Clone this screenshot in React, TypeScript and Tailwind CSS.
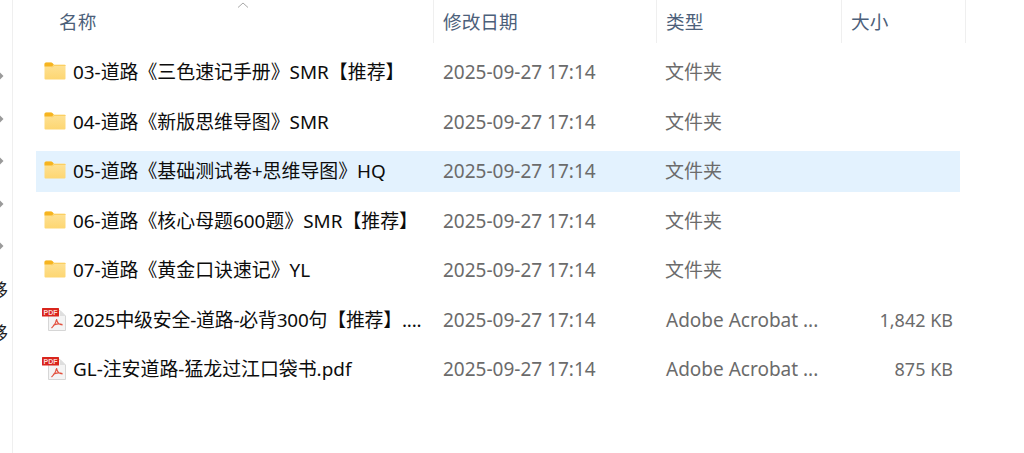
const CJK = "font-['Noto_Sans','Noto_Sans_CJK_SC',sans-serif]";

function FolderIcon() {
  return (
    <svg width="22" height="18" viewBox="0 0 22 18" className="mb-[3px] shrink-0">
      <defs>
        <linearGradient id="folderBody" x1="0" y1="0" x2="0" y2="1">
          <stop offset="0" stopColor="#fee39a" />
          <stop offset="1" stopColor="#fdd671" />
        </linearGradient>
      </defs>
      <path d="M0.5 2 Q0.5 0.5 2 0.5 H7 Q8 0.5 8.8 1.5 L9.5 2.5 H20.5 Q21.5 2.5 21.5 3.5 V16.5 Q21.5 17.5 20.5 17.5 H1.5 Q0.5 17.5 0.5 16.5 Z" fill="url(#folderBody)" />
      <path d="M8 5.5 L10 3.5 H21.5" fill="none" stroke="#fbcf62" strokeWidth="1" />
      <path d="M0.5 2 Q0.5 0.5 2 0.5 H7 Q8 0.5 8.8 1.5 L9.8 2.8 L8 4.4 H0.5 Z" fill="#f6b420" />
    </svg>
  );
}

function PdfIcon() {
  return (
    <svg width="24" height="23" viewBox="0 0 24 23" className="mb-[2px] shrink-0">
      <path d="M6.5 2.5 H18 L23.5 8 V22.5 H6.5 Z" fill="#f4f4f4" stroke="#d6d6d6" strokeWidth="1" />
      <path d="M18 2.5 V8 H23.5 Z" fill="#dedede" />
      <rect x="0" y="0" width="17" height="8.5" rx="0.5" fill="#d9251c" />
      <text x="8.5" y="7" textAnchor="middle" fontSize="7" fontWeight="700" fontFamily="Liberation Sans, sans-serif" fill="#f9d9d6">PDF</text>
      <path d="M14.5 11 C14 14 12.5 17.5 9.5 20 M14.5 11 C15 14.5 17 17 20.5 17 M11 17.5 C13.5 15.8 17.5 15.6 20.5 16.6" fill="none" stroke="#e2513f" strokeWidth="1.2" />
    </svg>
  );
}

const rows = [
  { name: "03-道路《三色速记手册》SMR【推荐】", type: "文件夹", size: "", pdf: false, sel: false },
  { name: "04-道路《新版思维导图》SMR", type: "文件夹", size: "", pdf: false, sel: false },
  { name: "05-道路《基础测试卷+思维导图》HQ", type: "文件夹", size: "", pdf: false, sel: true },
  { name: "06-道路《核心母题600题》SMR【推荐】", type: "文件夹", size: "", pdf: false, sel: false },
  { name: "07-道路《黄金口诀速记》YL", type: "文件夹", size: "", pdf: false, sel: false },
  { name: "2025中级安全-道路-必背300句【推荐】....", type: "Adobe Acrobat ...", size: "1,842 KB", pdf: true, sel: false },
  { name: "GL-注安道路-猛龙过江口袋书.pdf", type: "Adobe Acrobat ...", size: "875 KB", pdf: true, sel: false },
];

export default function App() {
  return (
    <div className={`flex h-[453px] w-[1024px] overflow-hidden bg-white text-[19px] leading-[27px] ${CJK}`}>
      <aside className="flex h-full w-[13px] shrink-0 flex-col border-r border-[#efefef] pt-[72px]">
        <div className="flex flex-col gap-[34.5px]">
          {[0, 1, 2, 3, 4].map((i) => (
            <svg key={i} width="4" height="8" viewBox="0 0 4 8"><path d="M0 0.5 L3.5 4 L0 7.5 Z" fill="#9a9a9a" /></svg>
          ))}
        </div>
        <div className="mt-[30px] flex flex-col gap-[23px] overflow-hidden text-[18px] leading-[20px] text-[#222]">
          <span className="ml-[-10px]">移</span>
          <span className="ml-[-10px]">移</span>
        </div>
      </aside>
      <main className="flex min-w-0 flex-1 flex-col">
        <header className="relative grid h-[41px] w-[953px] grid-cols-[421px_223px_185px_124px] text-[18.67px] text-[#4c607a]">
          <svg className="absolute left-[224px] top-[2px]" width="12" height="6" viewBox="0 0 12 6"><path d="M1 5.5 L6 1 L11 5.5" fill="none" stroke="#a8a8a8" strokeWidth="1" /></svg>
          <div className="border-r border-[#efefef] pl-[46px] leading-[43px]">名称</div>
          <div className="border-r border-[#efefef] pl-[9px] leading-[43px]">修改日期</div>
          <div className="border-r border-[#efefef] pl-[9px] leading-[43px]">类型</div>
          <div className="border-r border-[#efefef] pl-[9px] leading-[43px]">大小</div>
        </header>
        <div className="ml-[23px] mt-[11px] flex w-[924px] flex-col gap-[8.5px]">
          {rows.map((r) => (
            <div key={r.name} className={`grid h-[41px] grid-cols-[398px_223px_222px_74px] items-center ${r.sel ? "bg-[#e3f2fe]" : ""}`}>
              <div className="flex items-center">
                <div className={`flex w-[37px] shrink-0 ${r.pdf ? "pl-[6px]" : "pl-[8px]"}`}>{r.pdf ? <PdfIcon /> : <FolderIcon />}</div>
                <span className={`whitespace-nowrap text-[18.9px] text-[#0c0c0c] ${r.name.startsWith("2025") ? "tracking-[-0.2px]" : ""}`}>{r.name}</span>
              </div>
              <div className="pl-[9px] text-[#6b6b6b]">2025-09-27 17:14</div>
              <div className={`whitespace-nowrap text-[#6b6b6b] ${r.pdf ? "pl-[9px]" : "pl-[8px]"}`}>{r.type}</div>
              <div className="whitespace-nowrap text-right text-[18px] text-[#6b6b6b]">{r.size}</div>
            </div>
          ))}
        </div>
      </main>
    </div>
  );
}
